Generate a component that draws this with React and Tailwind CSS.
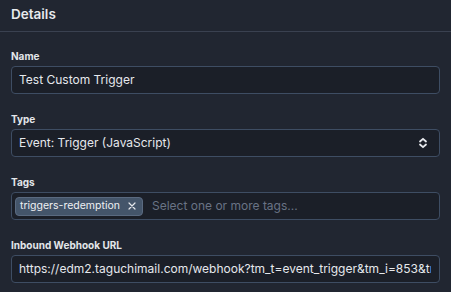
import React from "react";

const Field = ({ label, children }) => (
  <div className="mb-[17px]">
    <label className="block text-[10px] leading-4 font-bold text-[#e4e6ea] mb-[2px]">{label}</label>
    {children}
  </div>
);

const boxBase =
  "h-7 w-full rounded-[4px] border border-[#3e4d63] bg-[#1b1f28] flex items-center pr-2 text-[12px] text-[#e6e8ec] overflow-hidden whitespace-nowrap";

export default function App() {
  return (
    <div
      className="w-[451px] h-[292px] bg-[#212631] overflow-hidden"
      style={{ fontFamily: "Inter, 'Noto Sans', sans-serif" }}
    >
      {/* Header */}
      <div className="h-[32px] border-b border-[#3a4150] px-[11px] flex items-center">
        <h2 className="text-[13.5px] font-semibold text-[#e8eaee] -mt-[3px]">Details</h2>
      </div>

      <div className="px-[11px] pt-4">
        <Field label="Name">
          <div className={boxBase + " pl-[7px]"}>Test Custom Trigger</div>
        </Field>

        <Field label="Type">
          <div className={boxBase + " pl-[7px] justify-between"}>
            <span>Event: Trigger (JavaScript)</span>
            <svg width="10" height="12" viewBox="0 0 10 12" fill="none" stroke="#e6e8ec" strokeWidth="1.8" strokeLinecap="round" strokeLinejoin="round" className="mr-[3px]">
              <path d="M2 4.5 L5 1.8 L8 4.5" />
              <path d="M2 7.5 L5 10.2 L8 7.5" />
            </svg>
          </div>
        </Field>

        <Field label="Tags">
          <div className={boxBase + " pl-[3px] gap-[9px]"}>
            <span className="h-[19px] flex items-center gap-[8px] rounded-[4px] border border-[#5a6a80] bg-[#44556a] pl-[4px] pr-[6px] text-[10.5px] text-[#eef0f3]">
              triggers-redemption
              <svg width="8" height="8" viewBox="0 0 8 8" stroke="#e6e8ec" strokeWidth="1.2" strokeLinecap="round">
                <path d="M1 1 L7 7 M7 1 L1 7" />
              </svg>
            </span>
            <span className="text-[#697385]">Select one or more tags...</span>
          </div>
        </Field>

        <Field label="Inbound Webhook URL">
          <div className={boxBase + " pl-[7px]"}>
            <span className="flex-1 overflow-hidden">https://edm2.taguchimail.com/webhook?tm_t=event_trigger&amp;tm_i=853&amp;trigger=1</span>
          </div>
        </Field>
      </div>
    </div>
  );
}
